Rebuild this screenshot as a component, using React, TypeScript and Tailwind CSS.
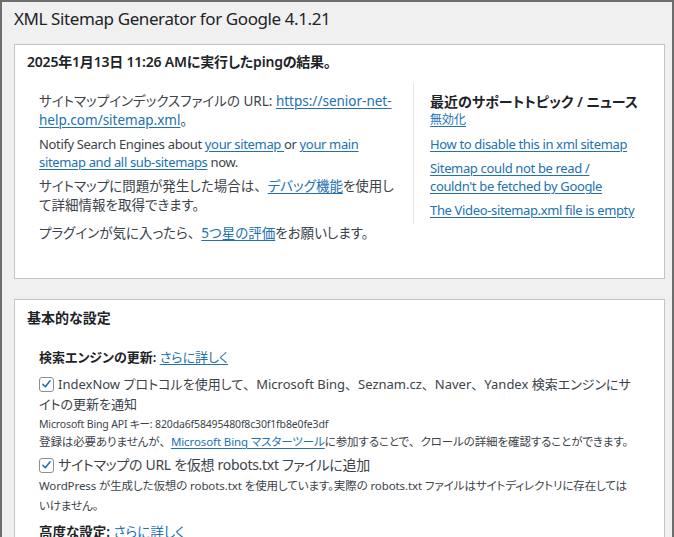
import React from "react";

const font = {
  fontFamily: '"Noto Sans", "Noto Sans CJK JP", sans-serif',
};

function Check() {
  return (
    <span className="inline-flex items-center justify-center w-[15px] h-[15px] border border-[#8c8f94] rounded-[3px] bg-white shrink-0 align-[-2px] mr-[4px]">
      <svg viewBox="0 0 20 20" className="w-[14px] h-[14px]">
        <path d="M4.5 10.5 L8.3 14.2 L15.5 5" fill="none" stroke="#2271b1" strokeWidth="2.4" strokeLinecap="round" strokeLinejoin="round" />
      </svg>
    </span>
  );
}

const C = () => <span className="[font-feature-settings:normal]">、</span>;

const A = ({ children }: { children: React.ReactNode }) => (
  <a className="text-[#2271b1] underline underline-offset-2 decoration-1">{children}</a>
);

export default function App() {
  return (
    <div
      style={font}
      className="w-[674px] h-[537px] overflow-hidden bg-[#f0f0f1] border-l-2 border-t-2 border-r-2 border-[#6d6d6d] text-[#3c434a] [font-feature-settings:'palt'] pl-[12px] pr-[7px]"
    >
      <h1 className="text-[17px] leading-[24px] tracking-[-0.4px] text-[#1d2327] pt-[5px] font-normal">
        XML Sitemap Generator for Google 4.1.21
      </h1>
      <div className="mt-[13px] bg-white border border-[#c3c4c7] h-[235px]">
        <div className="px-[12px] pt-[7px] text-[14px] leading-[20px] tracking-[-0.2px] font-semibold text-[#1d2327]">
          2025年1月13日 11:26 AMに実行したpingの結果。
        </div>
        <div className="flex pl-[24px] pt-[20px]">
          <div className="w-[374px] text-[13.5px] leading-[19px] pr-[6px]">
            <p className="whitespace-nowrap">
              サイトマップインデックスファイルの URL: <A>https://senior-net-<br />help.com/sitemap.xml</A>。
            </p>
            <p className="mt-[5px] leading-[18px] text-[13px] tracking-[-0.35px] whitespace-nowrap">
              Notify Search Engines about <A>your sitemap </A> or <A>your main<br />sitemap and all sub-sitemaps</A> now.
            </p>
            <p className="mt-[6px] whitespace-nowrap">
              サイトマップに問題が発生した場合は<C /><A>デバッグ機能</A>を使用し<br />て詳細情報を取得できます。
            </p>
            <p className="mt-[9px] whitespace-nowrap">
              プラグインが気に入ったら<C /><A>5つ星の評価</A>をお願いします。
            </p>
          </div>
          <div className="w-px bg-[#e5e5e5] mt-[-9px] h-[141px]" />
          <div className="pl-[16px] text-[13px] leading-[18px] tracking-[-0.35px] whitespace-nowrap">
            <div className="font-semibold text-[#1d2327] text-[14px] tracking-normal leading-[20px]">最近のサポートトピック / ニュース</div>
            <div className="text-[12px] leading-[16px] tracking-normal"><A>無効化</A></div>
            <div className="mt-[7px]"><A>How to disable this in xml sitemap</A></div>
            <div className="mt-[6px]"><A>Sitemap could not be read /<br />couldn't be fetched by Google</A></div>
            <div className="mt-[6px]"><A>The Video-sitemap.xml file is empty</A></div>
          </div>
        </div>
      </div>
      <div className="mt-[20px] bg-white border border-[#c3c4c7] h-[260px] px-[12px]">
        <div className="pt-[8px] text-[14px] leading-[20px] font-semibold text-[#1d2327]">基本的な設定</div>
        <div className="pl-[12px] pt-[20px] whitespace-nowrap">
          <div className="text-[13px] leading-[18px]">
            <span className="font-semibold text-[#1d2327]">検索エンジンの更新:</span> <A>さらに詳しく</A>
          </div>
          <div className="mt-[8px] text-[13px] leading-[20px]">
            <Check />IndexNow プロトコルを使用して<C />Microsoft Bing<C />Seznam.cz<C />Naver<C />Yandex 検索エンジンにサ<br />イトの更新を通知
          </div>
          <div className="text-[10.5px] leading-[18px] tracking-[-0.15px] mt-[1px]">Microsoft Bing API キー: 820da6f58495480f8c30f1fb8e0fe3df</div>
          <div className="text-[11.5px] leading-[18px] tracking-[-0.1px]">
            登録は必要ありませんが<C /><A>Microsoft Bing マスターツール</A>に参加することで<C />クロールの詳細を確認することができます。
          </div>
          <div className="mt-[3px] text-[14px] leading-[22px] tracking-[-0.3px]">
            <Check />サイトマップの URL を仮想 robots.txt ファイルに追加
          </div>
          <div className="text-[11.5px] leading-[20px] tracking-[-0.1px]">
            WordPress が生成した仮想の robots.txt を使用しています。実際の robots.txt ファイルはサイトディレクトリに存在しては<br />いけません。
          </div>
          <div className="mt-[6px] text-[13.5px] leading-[20px]">
            <span className="font-semibold text-[#1d2327]">高度な設定:</span> <A>さらに詳しく</A>
          </div>
        </div>
      </div>
    </div>
  );
}
